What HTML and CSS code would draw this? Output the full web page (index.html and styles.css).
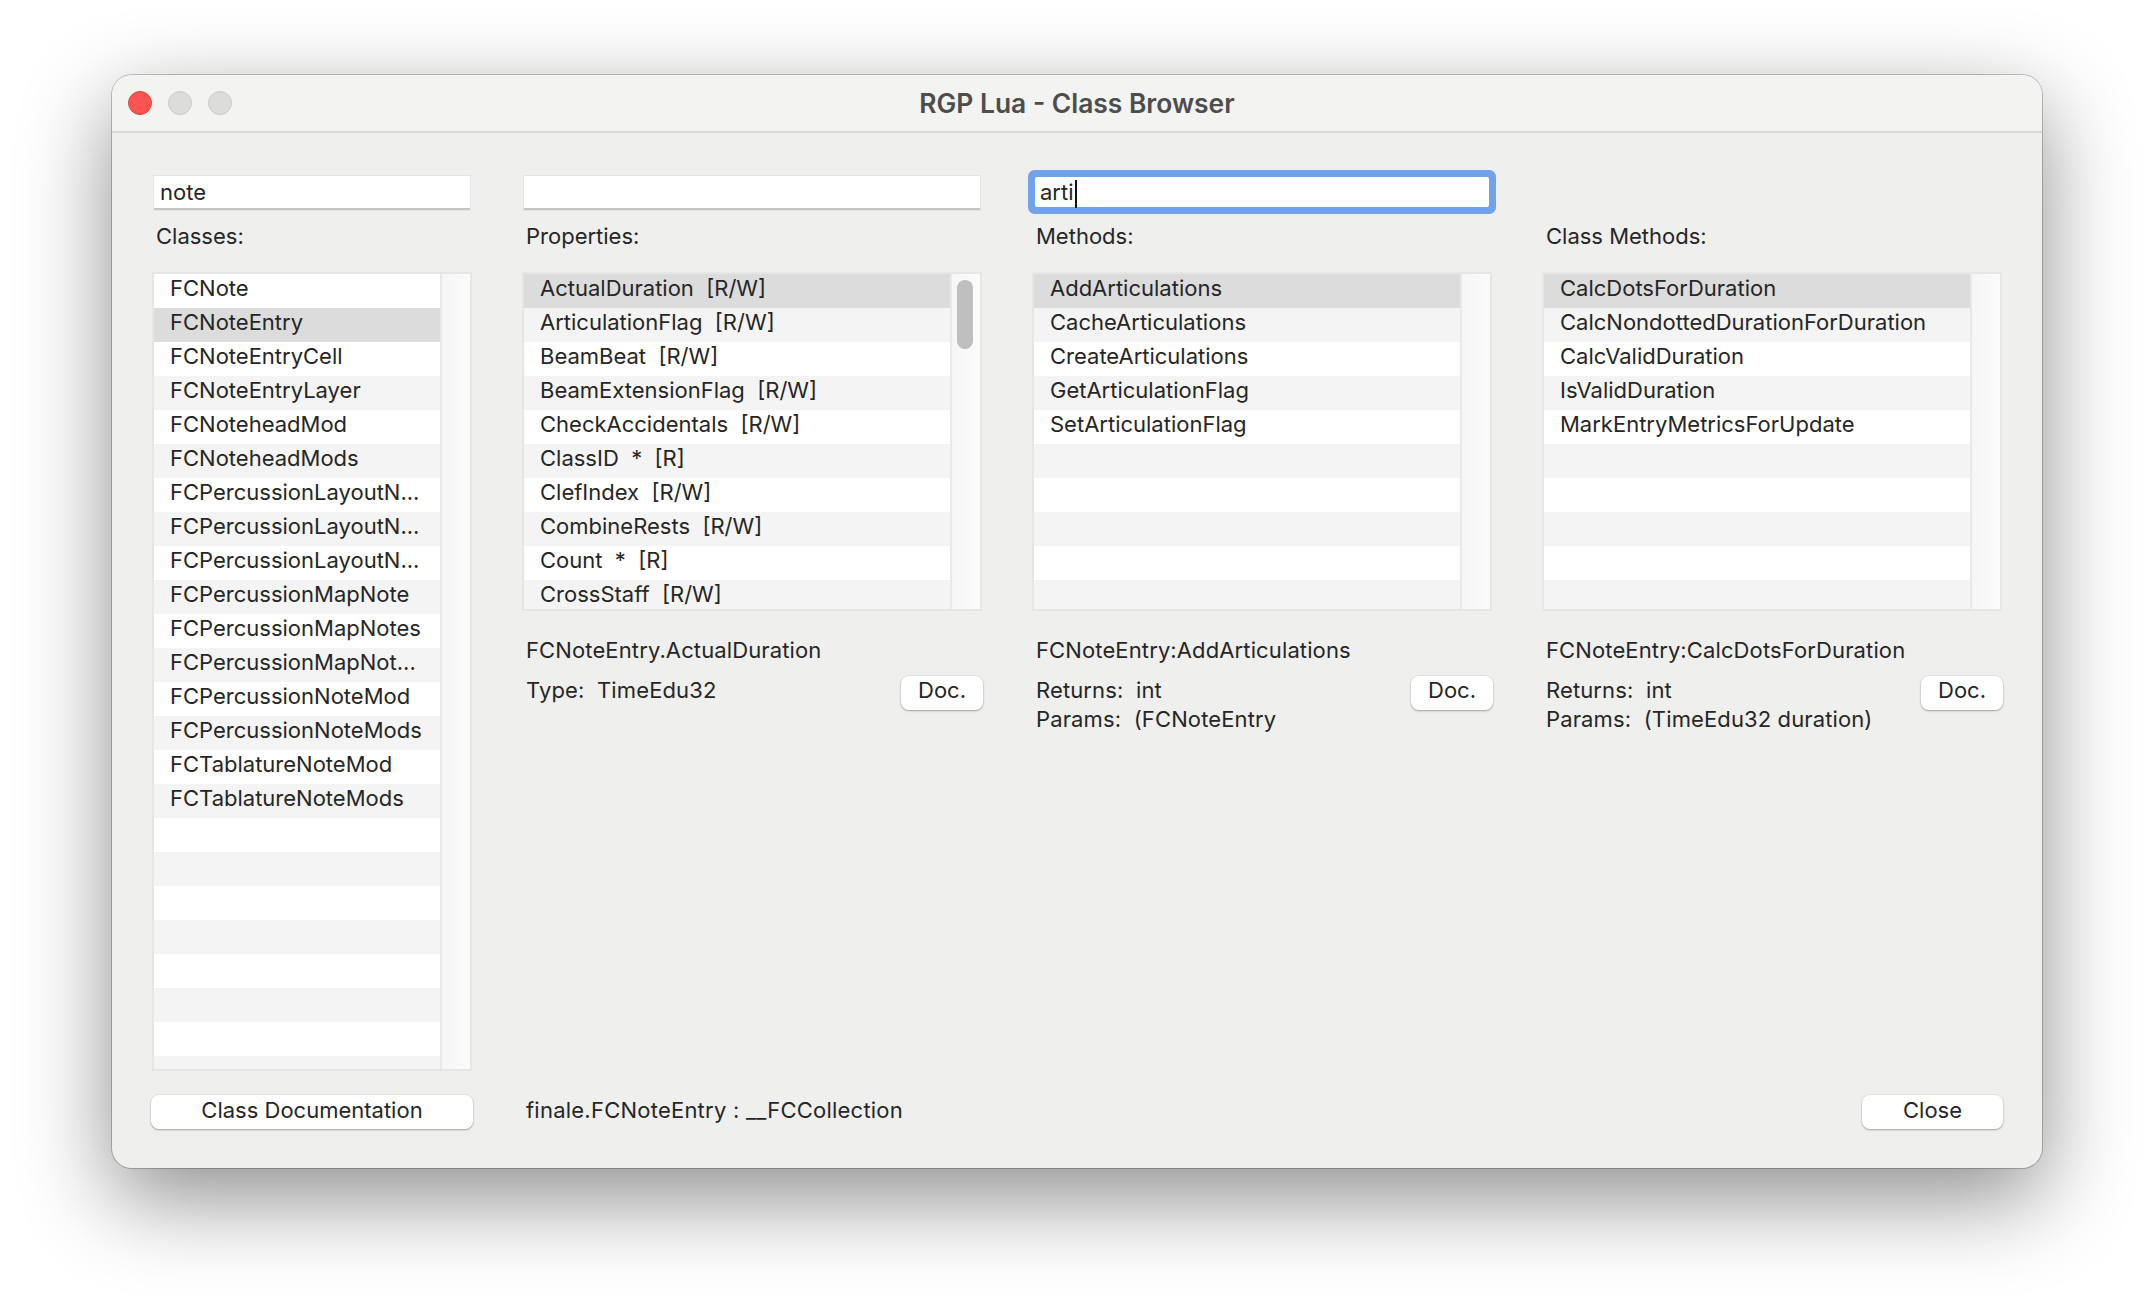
FILE: index.html
```html
<!DOCTYPE html>
<html lang="en">
<head>
<meta charset="utf-8">
<title>RGP Lua - Class Browser</title>
<link rel="stylesheet" href="styles.css">
</head>
<body>
<div class="window">
  <header class="titlebar">
    <div class="lights"><span class="light close"></span><span class="light"></span><span class="light"></span></div>
    <h1 class="title">RGP Lua - Class Browser</h1>
  </header>
  <main class="content">
    <div class="columns">
      <section class="col">
        <div class="input">note</div>
        <div class="label">Classes:</div>
        <div class="list grow">
          <div class="rows">
            <div class="row">FCNote</div>
            <div class="row sel">FCNoteEntry</div>
            <div class="row">FCNoteEntryCell</div>
            <div class="row">FCNoteEntryLayer</div>
            <div class="row">FCNoteheadMod</div>
            <div class="row">FCNoteheadMods</div>
            <div class="row">FCPercussionLayoutN...</div>
            <div class="row">FCPercussionLayoutN...</div>
            <div class="row">FCPercussionLayoutN...</div>
            <div class="row">FCPercussionMapNote</div>
            <div class="row">FCPercussionMapNotes</div>
            <div class="row">FCPercussionMapNot...</div>
            <div class="row">FCPercussionNoteMod</div>
            <div class="row">FCPercussionNoteMods</div>
            <div class="row">FCTablatureNoteMod</div>
            <div class="row">FCTablatureNoteMods</div>
            <div class="row"></div><div class="row"></div><div class="row"></div><div class="row"></div>
            <div class="row"></div><div class="row"></div><div class="row"></div><div class="row"></div>
          </div>
          <div class="track"></div>
        </div>
      </section>
      <section class="col">
        <div class="input"></div>
        <div class="label">Properties:</div>
        <div class="list">
          <div class="rows">
            <div class="row sel">ActualDuration&nbsp; [R/W]</div>
            <div class="row">ArticulationFlag&nbsp; [R/W]</div>
            <div class="row">BeamBeat&nbsp; [R/W]</div>
            <div class="row">BeamExtensionFlag&nbsp; [R/W]</div>
            <div class="row">CheckAccidentals&nbsp; [R/W]</div>
            <div class="row">ClassID&nbsp; *&nbsp; [R]</div>
            <div class="row">ClefIndex&nbsp; [R/W]</div>
            <div class="row">CombineRests&nbsp; [R/W]</div>
            <div class="row">Count&nbsp; *&nbsp; [R]</div>
            <div class="row">CrossStaff&nbsp; [R/W]</div>
          </div>
          <div class="track"><div class="thumb"></div></div>
        </div>
        <div class="detail">
          <div class="sig">FCNoteEntry.ActualDuration</div>
          <div class="info">
            <div class="lines"><div class="line">Type:&nbsp; TimeEdu32</div></div>
            <div class="btn doc">Doc.</div>
          </div>
        </div>
      </section>
      <section class="col">
        <div class="input focus">arti<span class="caret"></span></div>
        <div class="label">Methods:</div>
        <div class="list">
          <div class="rows">
            <div class="row sel">AddArticulations</div>
            <div class="row">CacheArticulations</div>
            <div class="row">CreateArticulations</div>
            <div class="row">GetArticulationFlag</div>
            <div class="row">SetArticulationFlag</div>
            <div class="row"></div><div class="row"></div><div class="row"></div><div class="row"></div><div class="row"></div>
          </div>
          <div class="track"></div>
        </div>
        <div class="detail">
          <div class="sig">FCNoteEntry:AddArticulations</div>
          <div class="info">
            <div class="lines">
              <div class="line">Returns:&nbsp; int</div>
              <div class="line">Params:&nbsp; (FCNoteEntry</div>
            </div>
            <div class="btn doc">Doc.</div>
          </div>
        </div>
      </section>
      <section class="col">
        <div class="input none"></div>
        <div class="label">Class Methods:</div>
        <div class="list">
          <div class="rows">
            <div class="row sel">CalcDotsForDuration</div>
            <div class="row">CalcNondottedDurationForDuration</div>
            <div class="row">CalcValidDuration</div>
            <div class="row">IsValidDuration</div>
            <div class="row">MarkEntryMetricsForUpdate</div>
            <div class="row"></div><div class="row"></div><div class="row"></div><div class="row"></div><div class="row"></div>
          </div>
          <div class="track"></div>
        </div>
        <div class="detail">
          <div class="sig">FCNoteEntry:CalcDotsForDuration</div>
          <div class="info">
            <div class="lines">
              <div class="line">Returns:&nbsp; int</div>
              <div class="line">Params:&nbsp; (TimeEdu32 duration)</div>
            </div>
            <div class="btn doc">Doc.</div>
          </div>
        </div>
      </section>
    </div>
    <footer class="footer">
      <div class="btn classdoc">Class Documentation</div>
      <div class="status">finale.FCNoteEntry : __FCCollection</div>
      <div class="btn closebtn">Close</div>
    </footer>
  </main>
</div>
</body>
</html>
```
FILE: styles.css
```css
* { box-sizing: border-box; }
html, body { margin: 0; height: 100%; }
body {
  background: #fff;
  padding: 75px 112px 0;
  font-family: Inter, "Liberation Sans", sans-serif;
  font-size: 22px;
  color: #262626;
  overflow: hidden;
}
.window {
  width: 1930px;
  height: 1093px;
  background: #efefee;
  border-radius: 20px;
  box-shadow: 0 0 0 1px rgba(0,0,0,.22), 0 30px 90px rgba(0,0,0,.45);
  display: flex;
  flex-direction: column;
  overflow: hidden;
}
.titlebar {
  height: 58px;
  flex: none;
  background: #f3f3f2;
  border-bottom: 2px solid #d9d9d8;
  display: flex;
  align-items: center;
  position: relative;
  padding-left: 16px;
}
.lights { display: flex; gap: 16px; }
.light {
  width: 24px; height: 24px; border-radius: 50%;
  background: #dcdcdb;
  border: 1px solid #c9c9c8;
}
.light.close { background: #fd5351; border-color: #e0443e; }
.title {
  position: absolute; left: 0; right: 0; top: 0; bottom: 0;
  margin: 0;
  display: flex; align-items: center; justify-content: center;
  font-size: 26.4px;
  font-weight: 600;
  color: #4d4d4d;
}
.content {
  flex: 1;
  display: flex;
  flex-direction: column;
  padding: 43px 40px 39px;
}
.columns {
  height: 895px;
  flex: none;
  display: grid;
  grid-template-columns: 320px 460px 460px 460px;
  grid-template-rows: minmax(0, 1fr);
  column-gap: 50px;
}
.col { display: flex; flex-direction: column; min-width: 0; min-height: 0; }
.input {
  height: 34px;
  margin: 0 2px;
  background: #fff;
  border-bottom: 2px solid #c4c4c4;
  box-shadow: 0 0 0 1px #e4e4e4;
  padding-left: 6px;
  line-height: 32px;
  flex: none;
}
.input.none { background: none; border: 0; box-shadow: none; }
.input.focus {
  border: 0;
  margin: 1px 3px 3px;
  height: 30px;
  box-shadow: 0 0 0 7px #71a3ec;
  border-radius: 2px;
  line-height: 30px;
  padding-left: 5px;
}
.caret {
  display: inline-block;
  width: 2px; height: 28px;
  background: #111;
  vertical-align: middle;
  margin-left: 1px;
}
.label {
  height: 62px;
  flex: none;
  padding: 8px 0 0 4px;
  line-height: 36px;
}
.list {
  display: flex;
  height: 339px;
  flex: none;
  border: 2px solid #e6e6e5;
  background: #fff;
  overflow: hidden;
}
.list.grow { height: auto; flex: 1; min-height: 0; }
.rows { flex: 1; min-width: 0; overflow: hidden; }
.row {
  height: 34px;
  line-height: 29px;
  padding: 0 16px;
  background: #fff;
  white-space: nowrap;
  overflow: hidden;
}
.row:nth-child(even) { background: #f4f4f4; }
.row.sel { background: #dcdcdc; }
.track {
  width: 30px;
  flex: none;
  border-left: 2px solid #e9e9e8;
  background: linear-gradient(to right, #f6f6f6, #fbfbfb);
  padding: 6px 5px 0;
}
.thumb { width: 16px; height: 69px; border-radius: 8px; background: #bfbfbf; }
.detail { padding: 21px 4px 0; letter-spacing: .12px; }
.sig { line-height: 36px; }
.info { display: flex; justify-content: space-between; align-items: flex-start; margin-top: 8px; margin-right: -5px; }
.line { line-height: 29px; height: 30px; }
.line + .line { margin-top: -1px; }
.btn {
  background: #fff;
  border-radius: 8px;
  box-shadow: 0 0 0 1px rgba(0,0,0,.04), 0 1px 2px rgba(0,0,0,.3);
  text-align: center;
  height: 34px;
  line-height: 30px;
  flex: none;
  letter-spacing: 0;
}
.doc { width: 82px; line-height: 29px; }
.footer {
  flex: none;
  display: flex;
  align-items: flex-start;
  margin-top: 24px;
  height: 34px;
}
.classdoc { width: 322px; margin-left: -1px; }
.status { margin-left: 53px; flex: 1; line-height: 30px; letter-spacing: .23px; }
.closebtn { width: 141px; margin-right: -1px; }
```
